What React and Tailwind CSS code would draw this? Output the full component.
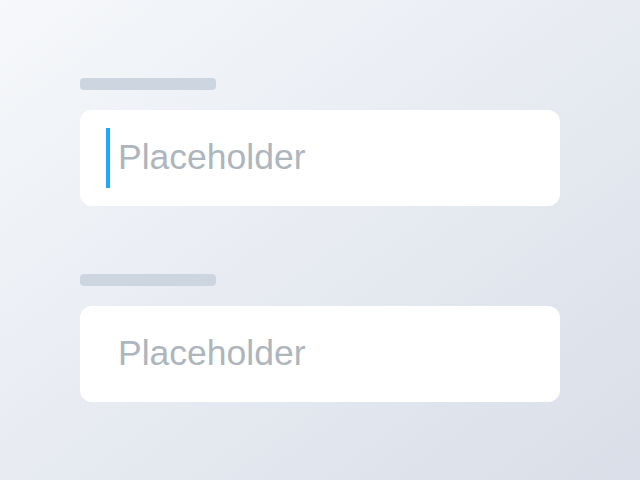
import React from 'react';

function Field({ focused }) {
  return (
    <div className="flex flex-col gap-5">
      <div className="h-3 w-[136px] rounded bg-[#cdd6e0]" />
      <div className="flex h-24 items-center rounded-xl bg-white pl-[26px]">
        {focused ? (
          <div className="h-[60px] w-1 bg-[#1ea7fd]" />
        ) : (
          <div className="h-[60px] w-1" />
        )}
        <span className="ml-2 text-[35.5px] leading-none text-[#adb5bd] [font-family:'Liberation_Sans',Arial,sans-serif]">
          Placeholder
        </span>
      </div>
    </div>
  );
}

export default function App() {
  return (
    <div className="flex h-[480px] w-[640px] flex-col gap-[68px] bg-gradient-to-br from-[#f6f8fb] to-[#d9dee8] px-20 pt-[78px]">
      <Field focused />
      <Field />
    </div>
  );
}
